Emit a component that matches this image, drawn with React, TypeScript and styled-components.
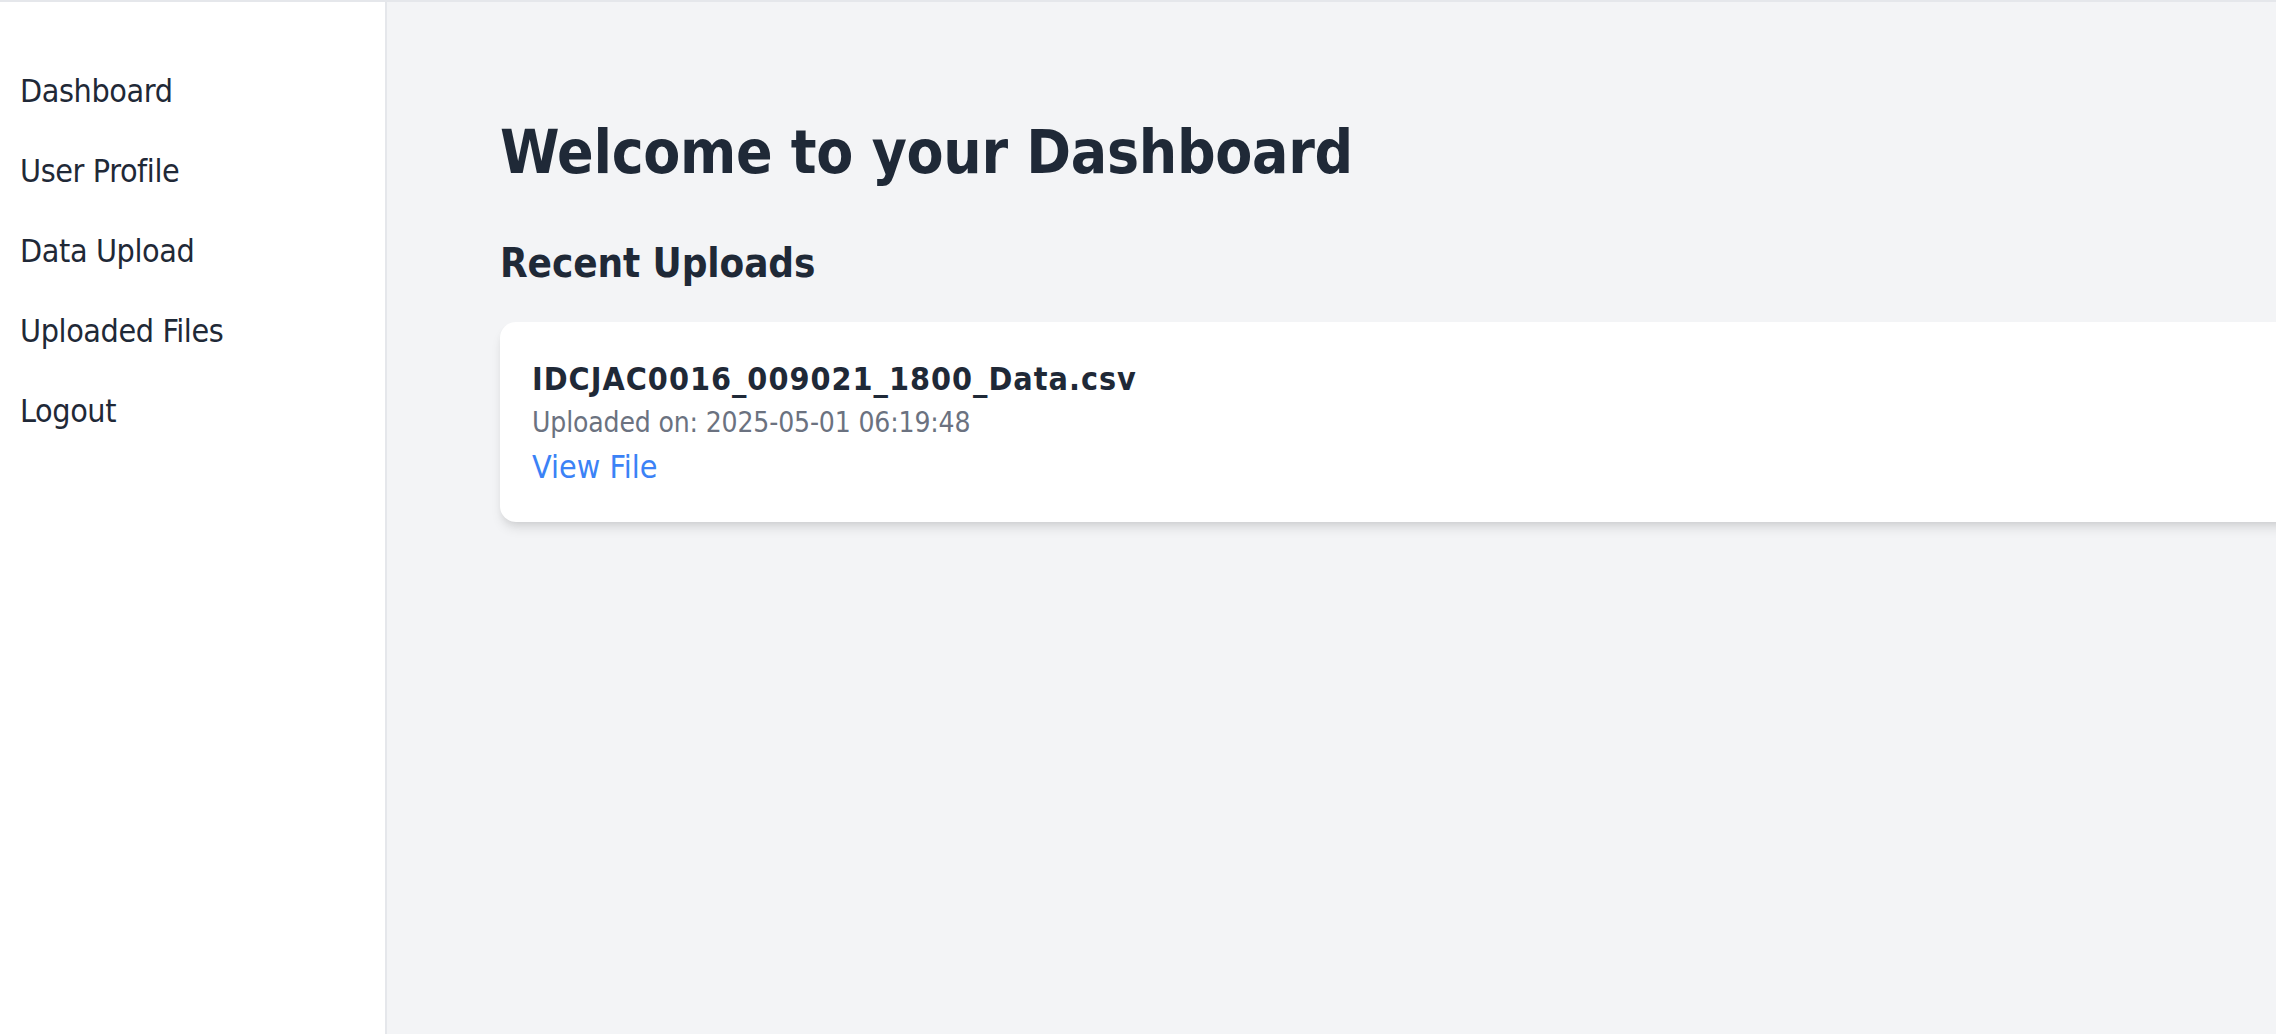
import React from "react";
import styled, { createGlobalStyle } from "styled-components";

const GlobalStyle = createGlobalStyle`
  html, body {
    margin: 0;
    padding: 0;
    overflow: hidden;
    background: #f3f4f6;
  }
  body {
    font-family: "DejaVu Sans Condensed", "DejaVu Sans", sans-serif;
    color: #1f2937;
  }
  * { box-sizing: border-box; }
`;

const Layout = styled.div`
  display: flex;
  min-height: 100vh;
  height: 1034px;
  border-top: 2px solid #e5e7eb;
`;

const Sidebar = styled.nav`
  flex: 0 0 387px;
  width: 387px;
  background: #ffffff;
  border-right: 2px solid #e5e7eb;
  padding-top: 49px;
  display: flex;
  flex-direction: column;
`;

const NavLink = styled.a`
  display: block;
  padding: 16px 20px;
  font-size: 32px;
  line-height: 48px;
  letter-spacing: -0.4px;
  color: #1f2937;
  text-decoration: none;
  cursor: pointer;
`;

const Main = styled.main`
  flex: 1;
  min-width: 0;
  background: #f3f4f6;
  padding: 114px 0 0 113px;
  overflow: hidden;
`;

const Content = styled.div`
  width: 1920px;
`;

const Title = styled.h1`
  margin: 0 0 51px;
  font-size: 60px;
  line-height: 72px;
  font-weight: 700;
  letter-spacing: -0.3px;
  color: #1f2937;
`;

const Subtitle = styled.h2`
  margin: 0 0 35px;
  font-size: 40px;
  line-height: 48px;
  font-weight: 700;
  letter-spacing: -0.1px;
  color: #1f2937;
`;

const Card = styled.div`
  background: #ffffff;
  border-radius: 16px;
  padding: 33px 32px 31px;
  box-shadow: 0 8px 12px -2px rgba(0, 0, 0, 0.1), 0 4px 8px -4px rgba(0, 0, 0, 0.1);
`;

const FileName = styled.div`
  font-size: 32px;
  line-height: 48px;
  font-weight: 700;
  letter-spacing: 1px;
  color: #1f2937;
`;

const Meta = styled.div`
  font-size: 28px;
  line-height: 40px;
  letter-spacing: -0.15px;
  color: #6b7280;
`;

const FileLink = styled.a`
  display: inline-block;
  font-size: 32px;
  line-height: 48px;
  color: #3b82f6;
  text-decoration: none;
  cursor: pointer;
`;

const navItems = ["Dashboard", "User Profile", "Data Upload", "Uploaded Files", "Logout"];

const uploads = [
  { name: "IDCJAC0016_009021_1800_Data.csv", date: "2025-05-01 06:19:48" },
];

export default function App() {
  return (
    <>
      <GlobalStyle />
      <Layout>
        <Sidebar>
          {navItems.map((item) => (
            <NavLink key={item}>{item}</NavLink>
          ))}
        </Sidebar>
        <Main>
          <Content>
            <Title>Welcome to your Dashboard</Title>
            <Subtitle>Recent Uploads</Subtitle>
            {uploads.map((u) => (
              <Card key={u.name}>
                <FileName>{u.name}</FileName>
                <Meta>Uploaded on: {u.date}</Meta>
                <FileLink>View File</FileLink>
              </Card>
            ))}
          </Content>
        </Main>
      </Layout>
    </>
  );
}
